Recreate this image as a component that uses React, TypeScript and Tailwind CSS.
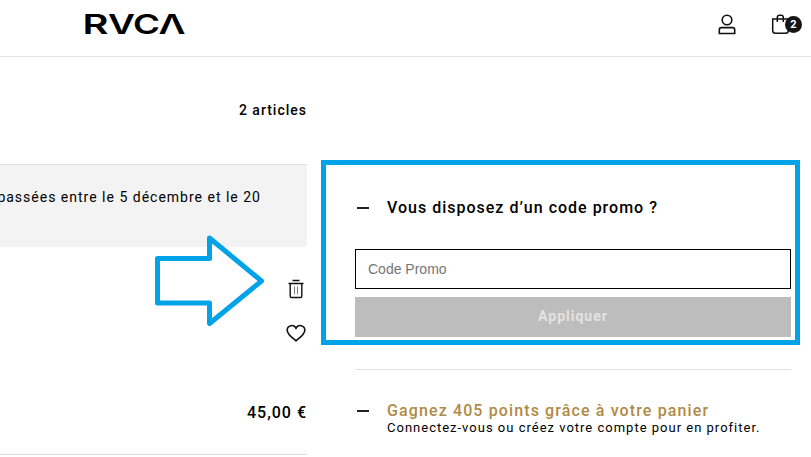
import type { ReactNode } from "react";

const logoLetters = [
  { char: "R", x: -1.5, width: 26 },
  { char: "V", x: 24, width: 27 },
  { char: "C", x: 49, width: 27 },
  { char: "Λ", x: 74.5, width: 27 },
];

function Logo() {
  return (
    <svg
      width="104"
      height="40"
      viewBox="-1 0 104 40"
      className="mt-1 ml-[83px] overflow-visible font-['Inter',sans-serif] text-[27px] font-semibold"
      aria-label="RVCA"
    >
      {logoLetters.map((letter) => (
        <text
          key={letter.char}
          x={letter.x}
          y="30"
          textLength={letter.width}
          lengthAdjust="spacingAndGlyphs"
        >
          {letter.char}
        </text>
      ))}
    </svg>
  );
}

function Header() {
  return (
    <header className="flex h-[57px] shrink-0 items-start justify-between border-b border-[#e3e3e3]">
      <Logo />
      <div className="flex pt-3">
        <svg
          width="20"
          height="24"
          viewBox="0 0 20 24"
          fill="none"
          stroke="#111"
          strokeWidth="1.6"
          className="mr-[33px]"
        >
          <circle cx="10" cy="8" r="4.8" />
          <path d="M4.5 15.6h11q2.2 0 2.2 2.2v3.7H2.3v-3.7q0-2.2 2.2-2.2z" />
        </svg>
        <div className="relative mr-2 h-6 w-[33px]">
          <svg
            width="22"
            height="24"
            viewBox="0 0 22 24"
            fill="none"
            stroke="#111"
            strokeWidth="1.5"
          >
            <path d="M2.7 7h15.6v11.5q0 2.8-2.8 2.8h-10q-2.8 0-2.8-2.8z" />
            <path d="M7.3 10V5.5q0-2.2 2.2-2.2h1.6q2.2 0 2.2 2.2V10" />
          </svg>
          <span className="absolute top-1 left-[15px] flex size-[17px] items-center justify-center rounded-full bg-[#151515] pt-px text-[11px] font-bold text-white">
            2
          </span>
        </div>
      </div>
    </header>
  );
}

function TrashIcon() {
  return (
    <svg
      width="18"
      height="20"
      viewBox="0 0 18 20"
      fill="none"
      stroke="#111"
      strokeWidth="1.4"
    >
      <path d="M5.5 1.5h7M1.5 4.5h15" />
      <path d="M3.2 4.5v12.7q0 1.3 1.3 1.3h9q1.3 0 1.3-1.3V4.5" />
      <path d="M7.5 7.5V15M10.5 7.5V15" stroke="#777" strokeWidth="1" />
    </svg>
  );
}

function HeartIcon() {
  return (
    <svg
      width="20"
      height="18"
      viewBox="0 0 20 18"
      fill="none"
      stroke="#111"
      strokeWidth="1.6"
      strokeLinejoin="round"
    >
      <path d="M10 16.9C7 14.3 1.2 10.5 1.2 6.2c0-5.2 6.8-6.3 8.800-1.800 2-4.500 8.800-3.400 8.800 1.800 0 4.300-5.800 8.100-8.800 10.700z" />
    </svg>
  );
}

function Arrow() {
  return (
    <svg
      width="112"
      height="94"
      viewBox="0 0 112 94"
      fill="none"
      stroke="#00a2e8"
      strokeWidth="5"
      strokeLinejoin="round"
      className="absolute top-[234px] left-[154px]"
    >
      <path d="M3.5 24.5h52V4L107.500 47l-52 42.500V69h-52z" />
    </svg>
  );
}

function Section({ children }: { children: ReactNode }) {
  return (
    <div className="flex items-start">
      <span className="mt-[11px] ml-0.5 h-0.5 w-3 bg-[#222]" />
      <div className="ml-[18px]">{children}</div>
    </div>
  );
}

export default function App() {
  return (
    <div className="relative flex h-[457px] w-[811px] flex-col overflow-hidden bg-white font-['Roboto',sans-serif] text-black">
      <Header />
      <main className="flex flex-1">
        <section className="flex w-[307px] flex-col">
          <p className="mt-[43px] text-right text-sm leading-5 font-medium tracking-[1px]">
            2 articles
          </p>
          <div className="mt-11 flex h-[83px] justify-end border-t border-[#e1e1e1] bg-[#f3f3f3] pt-[22px] pr-[46px] text-sm leading-5 tracking-[1px] whitespace-nowrap">
            passées entre le 5 décembre et le 20
          </div>
          <div className="mt-8 flex flex-col items-end gap-[25px]">
            <button className="mr-0.5">
              <TrashIcon />
            </button>
            <button className="mr-px">
              <HeartIcon />
            </button>
          </div>
          <div className="mt-[59px] h-[54px] border-b border-[#ddd] text-right text-base leading-6 font-medium tracking-[1px]">
            45,00 €
          </div>
        </section>

        <aside className="ml-12 w-[436px] pt-[139px]">
          <Section>
            <h2 className="text-base leading-6 font-medium tracking-[1px]">
              Vous disposez d’un code promo ?
            </h2>
          </Section>
          <input
            type="text"
            placeholder="Code Promo"
            className="mt-[29px] block h-10 w-full border border-black px-3 font-['Liberation_Sans',sans-serif] text-sm placeholder:text-[#757575]"
          />
          <button className="mt-2 block h-10 w-full bg-[#bdbdbd] pb-0.5 text-sm font-bold tracking-[1px] text-[#e3e3e3]">
            Appliquer
          </button>
          <hr className="mt-8 mb-[29px] border-[#e1e1e1]" />
          <Section>
            <h2 className="text-base leading-6 font-medium tracking-[1.12px] text-[#b08a45]">
              Gagnez 405 points grâce à votre panier
            </h2>
            <p className="-mt-[5px] text-[13px] leading-5 tracking-[1px] whitespace-nowrap">
              Connectez-vous ou créez votre compte pour en profiter.
            </p>
          </Section>
        </aside>
      </main>
      <div className="pointer-events-none absolute top-[160px] left-[321px] h-[185px] w-[479px] border-5 border-[#00a2e8]" />
      <Arrow />
    </div>
  );
}
